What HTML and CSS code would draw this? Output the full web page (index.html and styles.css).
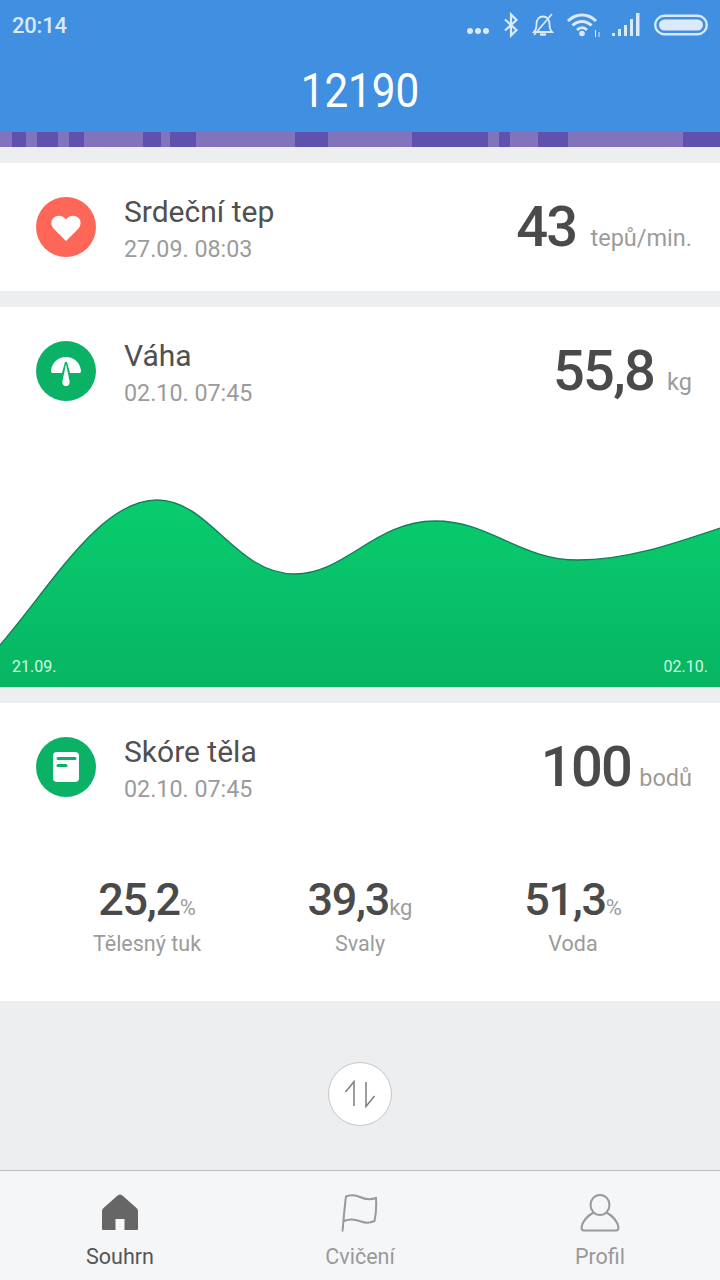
FILE: index.html
```html
<!DOCTYPE html>
<html lang="cs">
<head>
<meta charset="utf-8">
<title>Souhrn</title>
<link rel="stylesheet" href="styles.css">
</head>
<body>
<div class="app">
  <header class="header">
    <div class="status">
      <span class="clock">20:14</span>
      <div class="status-icons">
        <svg class="si si-dots" width="22" height="6" viewBox="0 0 22 6"><circle cx="3" cy="3" r="3" fill="#dbe9fb"/><circle cx="11" cy="3" r="3" fill="#dbe9fb"/><circle cx="19" cy="3" r="3" fill="#dbe9fb"/></svg>
        <svg class="si si-bt" width="18" height="26" viewBox="0 0 18 26"><path d="M3 7.500 14.500 18 9 23.500V2.500L14.500 8 3 18.500" fill="none" stroke="#dbe9fb" stroke-width="2.200"/></svg>
        <svg class="si" width="24" height="26" viewBox="0 0 24 26"><path d="M3 20C5 18 5.500 16 5.500 12C5.500 7.500 8 4.500 12 4.500C16 4.500 18.500 7.500 18.500 12C18.500 16 19 18 21 20Z" fill="none" stroke="#dbe9fb" stroke-width="1.800"/><path d="M9 22.500H15" stroke="#dbe9fb" stroke-width="2.400"/><path d="M3 23 21 2" stroke="#dbe9fb" stroke-width="1.800"/></svg>
        <svg class="si" width="34" height="26" viewBox="0 0 34 26"><path d="M2 9C10 1 22 1 30 9M6.500 13.500C12 8 20 8 25.500 13.500M11 18C14 15 18 15 21 18" fill="none" stroke="#dbe9fb" stroke-width="3"/><circle cx="16" cy="21.500" r="2.800" fill="#dbe9fb"/><path d="M29.500 18V25M33 20V25" stroke="#dbe9fb" stroke-width="1"/></svg>
        <svg class="si" width="30" height="24" viewBox="0 0 30 24"><path d="M1 21H4V24H1ZM7 17H10V24H7ZM13 13H16V24H13ZM19 7H22V24H19ZM25 1H28.500V24H25Z" fill="#dbe9fb" transform="translate(0 -1)"/></svg>
        <svg class="si si-batt" width="54" height="22" viewBox="0 0 54 22"><rect x="1.200" y="1.800" width="51.600" height="18.400" rx="9.200" fill="none" stroke="#dbe9fb" stroke-width="2.400"/><rect x="5" y="5.500" width="44" height="11" rx="5.500" fill="#dbe9fb"/></svg>
      </div>
    </div>
    <h1 class="steps">12190</h1>
  </header>

  <div class="timeline">
    <span class="seg seg-a"></span><span class="seg seg-b"></span><span class="seg seg-c"></span><span class="seg seg-d"></span><span class="seg seg-e"></span><span class="seg seg-f"></span><span class="seg seg-g"></span><span class="seg seg-h"></span><span class="seg seg-i"></span><span class="seg seg-j"></span>
  </div>

  <section class="card card-heart">
    <div class="row">
      <span class="badge badge-red">
        <svg width="32" height="32" viewBox="0 0 32 32"><path d="M16 30 3.500 17.500C0 13.500 1 7.500 5.500 5.500C9.500 3.800 13.500 5 16 8.500C18.500 5 22.500 3.800 26.500 5.500C31 7.500 32 13.500 28.500 17.500Z" fill="#fff"/></svg>
      </span>
      <div class="info"><div class="name">Srdeční tep</div><div class="date">27.09. 08:03</div></div>
      <div class="value"><span class="num">43</span><span class="unit unit-wide">tepů/min.</span></div>
    </div>
  </section>

  <section class="card card-weight">
    <div class="row">
      <span class="badge badge-green">
        <svg width="32" height="32" viewBox="0 0 32 32"><path d="M1 16C1.500 8 8 2 16 2C24 2 30.500 8 31 16C31 17.500 30.300 18 29 18H20L17 7H15L12 18H3C1.700 18 1 17.500 1 16Z" fill="#fff"/><path d="M16 9 19.500 26C20 29.500 18.500 31 16 31C13.500 31 12 29.500 12.500 26Z" fill="#fff"/></svg>
      </span>
      <div class="info"><div class="name">Váha</div><div class="date">02.10. 07:45</div></div>
      <div class="value"><span class="num">55,8</span><span class="unit unit-kg">kg</span></div>
    </div>
    <div class="chart">
      <svg class="chart-svg" width="720" height="247" viewBox="0 440 720 247">
        <defs><linearGradient id="fill" x1="0" y1="0" x2="0" y2="1"><stop offset="0" stop-color="#09cc6e"/><stop offset="1" stop-color="#07b562"/></linearGradient></defs>
        <path d="M0 645C52 585 100 500 157 500C210 500 235 574 295 574C345 574 375 521 435 521C490 521 520 560 578 560C625 560 670 545 720 528V687H0Z" fill="url(#fill)"/>
        <path d="M0 645C52 585 100 500 157 500C210 500 235 574 295 574C345 574 375 521 435 521C490 521 520 560 578 560C625 560 670 545 720 528" fill="none" stroke="#17795a" stroke-width="1.300"/>
      </svg>
      <span class="chart-date chart-start">21.09.</span>
      <span class="chart-date chart-end">02.10.</span>
    </div>
  </section>

  <section class="card card-score">
    <div class="row">
      <span class="badge badge-green">
        <svg width="28" height="30" viewBox="0 0 28 30"><rect x="1" y="0" width="26" height="30" rx="4" fill="#fff"/><path d="M6 6.500H23M6 13.500H14" stroke="#0bb266" stroke-width="3" stroke-linecap="round"/></svg>
      </span>
      <div class="info"><div class="name">Skóre těla</div><div class="date">02.10. 07:45</div></div>
      <div class="value"><span class="num">100</span><span class="unit unit-pts">bodů</span></div>
    </div>
    <div class="stats">
      <div class="stat"><div class="stat-val">25,2<span class="stat-unit">%</span></div><div class="stat-name">Tělesný tuk</div></div>
      <div class="stat"><div class="stat-val">39,3<span class="stat-unit">kg</span></div><div class="stat-name">Svaly</div></div>
      <div class="stat"><div class="stat-val">51,3<span class="stat-unit">%</span></div><div class="stat-name">Voda</div></div>
    </div>
  </section>

  <div class="sort-area">
    <button class="sort" type="button" aria-label="Seřadit">
      <svg width="34" height="30" viewBox="0 0 34 30"><path d="M2.500 13 11 2.500V27M23 3V27.500L31.500 17" fill="none" stroke="#7d7d7d" stroke-width="1.500"/></svg>
    </button>
  </div>

  <nav class="tabs">
    <div class="tab tab-active">
      <svg width="40" height="40" viewBox="0 0 40 40"><path d="M20 .5C21 .5 22 1 23 2L36.500 14C37.500 15 38 16 38 17.500V34.500C38 35.500 37.500 36 36.500 36H24.500V25H15.500V36H3.500C2.500 36 2 35.500 2 34.500V17.500C2 16 2.500 15 3.500 14L17 2C18 1 19 .5 20 .5Z" fill="#666"/></svg>
      <span>Souhrn</span>
    </div>
    <div class="tab">
      <svg width="40" height="40" viewBox="0 0 40 40"><path d="M2.500 37.500C3.500 27 4.500 13 6 2.500C11 .5 16 1 20 3C25 5.500 30 6 36 4C36.500 12 36 20 34.500 27C29 29.500 25 29 21 27.500C15.500 25.500 9.500 24.500 4.200 27" fill="none" stroke="#999" stroke-width="2"/></svg>
      <span>Cvičení</span>
    </div>
    <div class="tab">
      <svg width="40" height="40" viewBox="0 0 40 40"><ellipse cx="20" cy="11" rx="9.500" ry="10" fill="none" stroke="#999" stroke-width="2"/><path d="M13.500 18.500C7 22 2 28 1.500 33.500C1.500 35.500 2.500 36.500 4 36.500H36C37.500 36.500 38.500 35.500 38.500 33.500C38 28 33 22 26.500 18.500" fill="none" stroke="#999" stroke-width="2"/></svg>
      <span>Profil</span>
    </div>
  </nav>
</div>
</body>
</html>
```
FILE: styles.css
```css
* { box-sizing: border-box; }
html, body { margin: 0; padding: 0; }
body { background: #edeef0; font-family: Roboto, "Noto Sans", sans-serif; }
.app { width: 720px; height: 1280px; display: flex; flex-direction: column; overflow: hidden; background: #edeef0; }

.header { height: 132px; background: #418fe0; color: #fff; flex: none; }
.status { height: 50px; padding: 0 12px; display: flex; align-items: center; justify-content: space-between; }
.clock { font-size: 22px; font-weight: 500; color: #d9e9fb; letter-spacing: -.2px; }
.status-icons { display: flex; align-items: center; gap: 11px; }
.si { display: block; }
.si-dots { margin-top: 12px; margin-right: 2px; }
.si-batt { margin-left: 2px; }
.steps { margin: 0; text-align: center; font-size: 48px; font-weight: 400; line-height: 82px; transform: scaleX(.88); height: 82px; }

.timeline { flex: none; height: 15px; background: #8273bc; position: relative; overflow: hidden; }
.seg { position: absolute; top: 0; bottom: 0; background: #6151ae; }
.seg-a { left: 12px; width: 14px; }
.seg-b { left: 37px; width: 21px; }
.seg-c { left: 69px; width: 15px; }
.seg-d { left: 143px; width: 18px; }
.seg-e { left: 170px; width: 26px; }
.seg-f { left: 295px; width: 33px; }
.seg-g { left: 412px; width: 76px; }
.seg-h { left: 499px; width: 11px; }
.seg-i { left: 538px; width: 30px; }
.seg-j { left: 683px; width: 37px; }

.card { background: #fff; flex: none; margin-top: 16px; }
.card-heart { height: 128px; }
.card-weight { height: 380px; }
.card-score { height: 298px; }

.row { display: flex; align-items: flex-start; padding: 34px 28px 0 36px; }
.badge { width: 60px; height: 60px; border-radius: 50%; flex: none; display: flex; align-items: center; justify-content: center; }
.badge-red { background: #fe6657; }
.badge-green { background: #0bb266; }
.info { margin-left: 28px; flex: 1; }
.name { font-size: 30px; line-height: 30px; color: #505050; }
.date { font-size: 23.300px; line-height: 28px; color: #9b9b9b; margin-top: 8px; }
.value { display: flex; align-items: baseline; }
.num { font-size: 56px; line-height: 60px; font-weight: 500; color: #4a4a4a; letter-spacing: -1.700px; margin-left: -1px; }
.unit { font-size: 23.500px; color: #9b9b9b; }
.unit-wide { margin-left: 14px; }
.unit-kg { margin-left: 13px; }
.unit-pts { margin-left: 8px; }

.chart { position: relative; height: 247px; margin-top: 33px; }
.chart-svg { display: block; }
.chart-date { position: absolute; bottom: 10px; font-size: 16px; line-height: 20px; color: #d2f9e4; }
.chart-start { left: 12px; }
.chart-end { right: 12px; }

.stats { display: grid; grid-template-columns: 213px 213px 213px; justify-content: center; margin-top: 72px; }
.stat { text-align: center; }
.stat-val { font-size: 45px; line-height: 50px; font-weight: 500; color: #4a4a4a; letter-spacing: -1.300px; }
.stat-unit { font-size: 22px; font-weight: 400; color: #9b9b9b; letter-spacing: 0; }
.stat-name { font-size: 21.500px; line-height: 26px; color: #9b9b9b; margin-top: -2px; }

.sort-area { flex: 1; display: flex; justify-content: center; padding-top: 61px; }
.sort { width: 64px; height: 64px; padding: 0; border-radius: 50%; border: 1px solid #c6c6c6; background: #fff; display: flex; align-items: center; justify-content: center; }

.tabs { flex: none; height: 110px; display: grid; grid-template-columns: repeat(3, 1fr); background: #f5f6f8; border-top: 1px solid #bdbdbd; }
.tab { display: flex; flex-direction: column; align-items: center; padding-top: 23px; font-size: 21.500px; line-height: 26px; color: #999; }
.tab svg { display: block; margin-bottom: 10px; }
.tab-active { color: #555; }
```
